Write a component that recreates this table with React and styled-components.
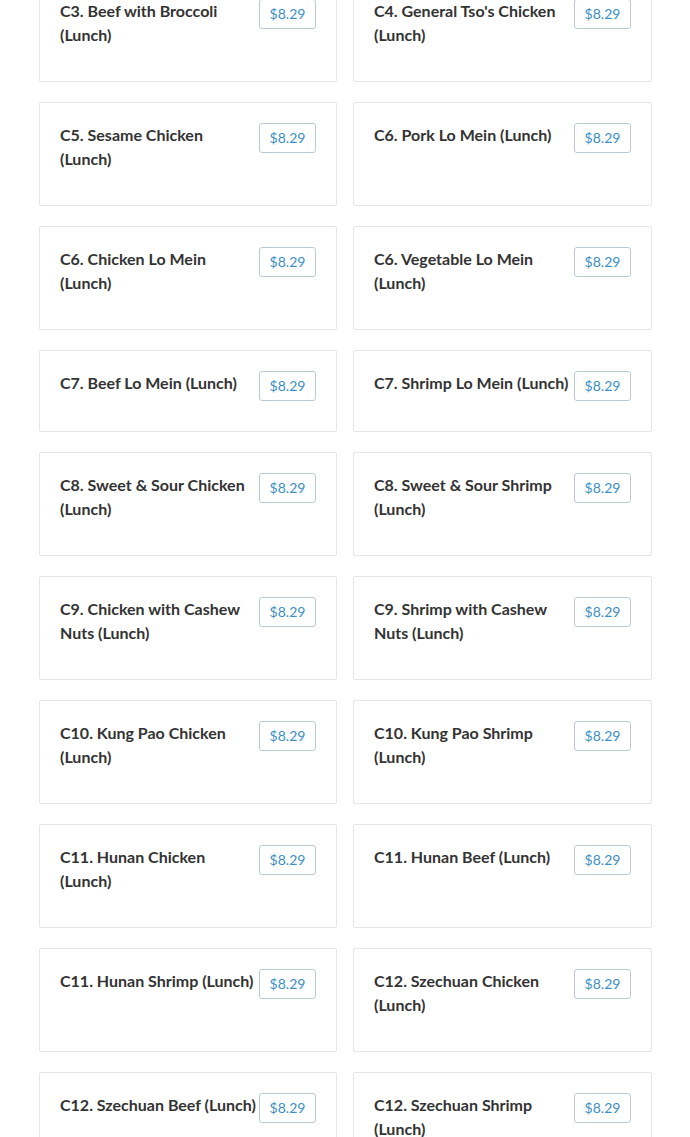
import React from "react";
import styled, { createGlobalStyle } from "styled-components";

const items = [
  "C3. Beef with Broccoli (Lunch)",
  "C4. General Tso's Chicken (Lunch)",
  "C5. Sesame Chicken (Lunch)",
  "C6. Pork Lo Mein (Lunch)",
  "C6. Chicken Lo Mein (Lunch)",
  "C6. Vegetable Lo Mein (Lunch)",
  "C7. Beef Lo Mein (Lunch)",
  "C7. Shrimp Lo Mein (Lunch)",
  "C8. Sweet & Sour Chicken (Lunch)",
  "C8. Sweet & Sour Shrimp (Lunch)",
  "C9. Chicken with Cashew Nuts (Lunch)",
  "C9. Shrimp with Cashew Nuts (Lunch)",
  "C10. Kung Pao Chicken (Lunch)",
  "C10. Kung Pao Shrimp (Lunch)",
  "C11. Hunan Chicken (Lunch)",
  "C11. Hunan Beef (Lunch)",
  "C11. Hunan Shrimp (Lunch)",
  "C12. Szechuan Chicken (Lunch)",
  "C12. Szechuan Beef (Lunch)",
  "C12. Szechuan Shrimp (Lunch)",
];

export default function App() {
  return (
    <React.Fragment>
      <GlobalStyle />
      <Menu>
        {items.map((name) => (
          <Card key={name}>
            <Title>{name}</Title>
            <Price>$8.29</Price>
          </Card>
        ))}
      </Menu>
    </React.Fragment>
  );
}

const GlobalStyle = createGlobalStyle`
  body {
    margin: 0;
    background: #fff;
    font-family: Lato, "Open Sans", Arial, sans-serif;
    overflow: hidden;
  }
`;

const Menu = styled.div`
  display: grid;
  grid-template-columns: 298px 299px;
  column-gap: 16px;
  row-gap: 20px;
  margin-top: -22px;
  margin-left: 39px;
`;

const Card = styled.div`
  display: flex;
  align-items: flex-start;
  border: 1px solid #e6e6e6;
  border-radius: 2px;
  padding: 20px 20px 24px 20px;
  background: #fff;
`;

const Title = styled.div`
  flex: 1;
  padding-right: 2px;
  font-size: 16px;
  line-height: 24px;
  font-weight: 700;
  color: #333;
  margin-bottom: 10px;
`;

const Price = styled.div`
  flex-shrink: 0;
  box-sizing: border-box;
  width: 57px;
  height: 30px;
  text-align: center;
  line-height: 28px;
  font-size: 14px;
  font-weight: 400;
  color: #3b8fc6;
  border: 1px solid #b9cad5;
  border-radius: 3px;
  margin-bottom: 6px;
`;
